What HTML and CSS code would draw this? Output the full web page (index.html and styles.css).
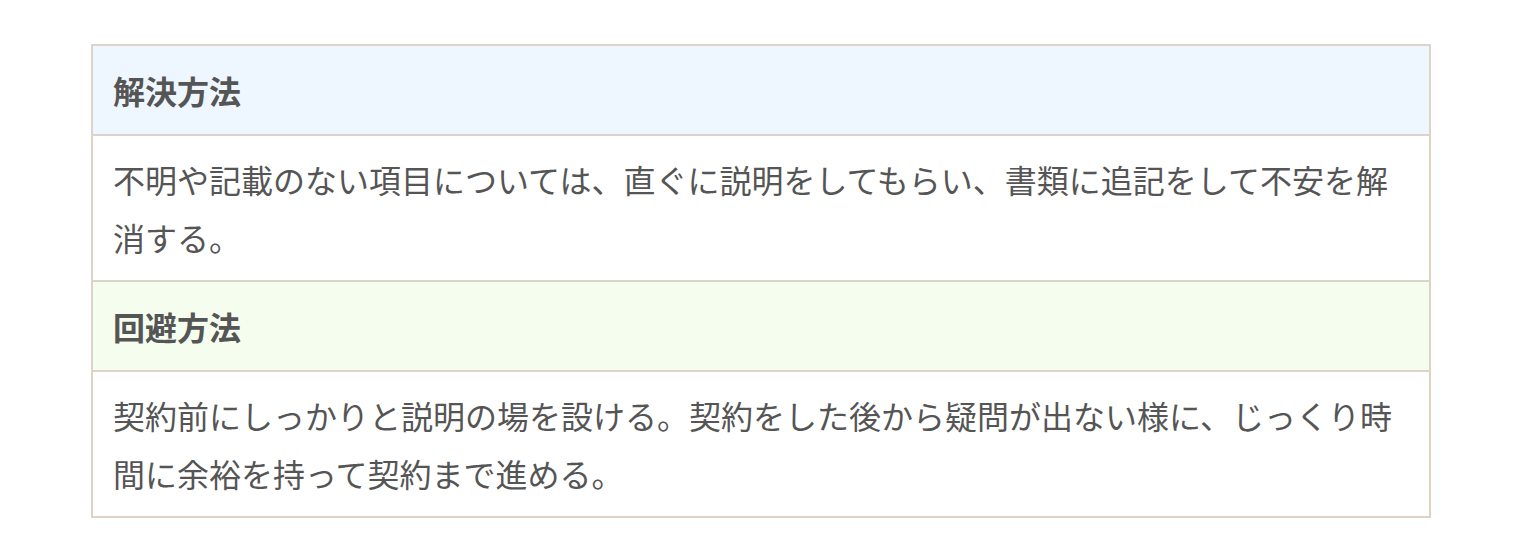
FILE: index.html
```html
<!DOCTYPE html>
<html lang="ja">
<head>
<meta charset="utf-8">
<link rel="stylesheet" href="styles.css">
</head>
<body>
<div class="page">
  <div class="box">
    <div class="row head head-blue">解決方法</div>
    <div class="row body">不明や記載のない項目については、直ぐに説明をしてもらい、書類に追記をして不安を解消する。</div>
    <div class="row head head-green">回避方法</div>
    <div class="row body">契約前にしっかりと説明の場を設ける。契約をした後から疑問が出ない様に、じっくり時間に余裕を持って契約まで進める。</div>
  </div>
</div>
</body>
</html>
```

FILE: styles.css
```css
html, body {
  margin: 0;
  padding: 0;
  background: #ffffff;
}
.page {
  padding: 44px 0 0 91px;
}
.box {
  width: 1340px;
  box-sizing: border-box;
  border: 2px solid #ddd4c7;
  display: flex;
  flex-direction: column;
  font-family: "Noto Sans CJK JP", "Noto Sans", sans-serif;
  font-size: 32px;
  line-height: 58px;
  color: #555555;
}
.row {
  padding: 14px 20px;
}
.row + .row {
  border-top: 2px solid #ddd4c7;
}
.head {
  padding: 15px 20px;
  font-weight: bold;
  color: #555555;
}
.head-blue {
  background: #eef6ff;
}
.head-green {
  background: #f4fdee;
}
```
